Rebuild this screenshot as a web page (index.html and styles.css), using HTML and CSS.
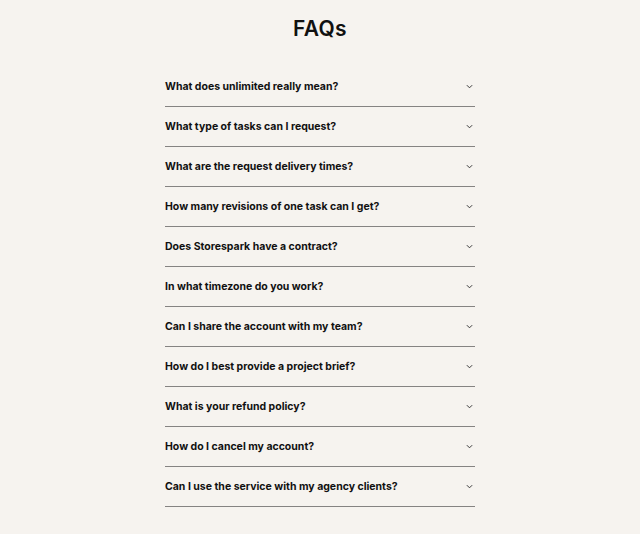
FILE: index.html
```html
<!DOCTYPE html>
<html>
	<head>
		<title>FAQs</title>
		<link rel="stylesheet" href="styles.css">
	</head>
	<body>
		<div class="faq">
			<h2 class="faq-title">FAQs</h2>
			<div class="faq-list">
				<div class="faq-item"><span>What does unlimited really mean?</span><svg class="chev" viewBox="0 0 8 5"><path d="M1 1l3 3 3-3"/></svg></div>
				<div class="faq-item"><span>What type of tasks can I request?</span><svg class="chev" viewBox="0 0 8 5"><path d="M1 1l3 3 3-3"/></svg></div>
				<div class="faq-item"><span>What are the request delivery times?</span><svg class="chev" viewBox="0 0 8 5"><path d="M1 1l3 3 3-3"/></svg></div>
				<div class="faq-item"><span>How many revisions of one task can I get?</span><svg class="chev" viewBox="0 0 8 5"><path d="M1 1l3 3 3-3"/></svg></div>
				<div class="faq-item"><span>Does Storespark have a contract?</span><svg class="chev" viewBox="0 0 8 5"><path d="M1 1l3 3 3-3"/></svg></div>
				<div class="faq-item"><span>In what timezone do you work?</span><svg class="chev" viewBox="0 0 8 5"><path d="M1 1l3 3 3-3"/></svg></div>
				<div class="faq-item"><span>Can I share the account with my team?</span><svg class="chev" viewBox="0 0 8 5"><path d="M1 1l3 3 3-3"/></svg></div>
				<div class="faq-item"><span>How do I best provide a project brief?</span><svg class="chev" viewBox="0 0 8 5"><path d="M1 1l3 3 3-3"/></svg></div>
				<div class="faq-item"><span>What is your refund policy?</span><svg class="chev" viewBox="0 0 8 5"><path d="M1 1l3 3 3-3"/></svg></div>
				<div class="faq-item"><span>How do I cancel my account?</span><svg class="chev" viewBox="0 0 8 5"><path d="M1 1l3 3 3-3"/></svg></div>
				<div class="faq-item"><span>Can I use the service with my agency clients?</span><svg class="chev" viewBox="0 0 8 5"><path d="M1 1l3 3 3-3"/></svg></div>
			</div>
		</div>
	</body>
</html>
```
FILE: styles.css
```css
body{
	margin: 0;
	background: #f6f3ef;
	font-family: "Inter", "Noto Sans", sans-serif;
	color: #111;
}
.faq{
	width: 310px;
	margin: 0 auto;
	padding-top: 15px;
}
.faq-title{
	margin: 0 0 24px 0;
	text-align: center;
	font-size: 21px;
	font-weight: 600;
	line-height: 28px;
	letter-spacing: 0.3px;
}
.faq-list{
	display: flex;
	flex-direction: column;
}
.faq-item{
	height: 39px;
	border-bottom: 1px solid #858382;
	display: flex;
	align-items: center;
	justify-content: space-between;
	font-size: 10.5px;
	font-weight: 700;
}
.chev{
	width: 7px;
	height: 5px;
	margin-right: 2px;
	fill: none;
	stroke: #333;
	stroke-width: 1.1;
}
```
